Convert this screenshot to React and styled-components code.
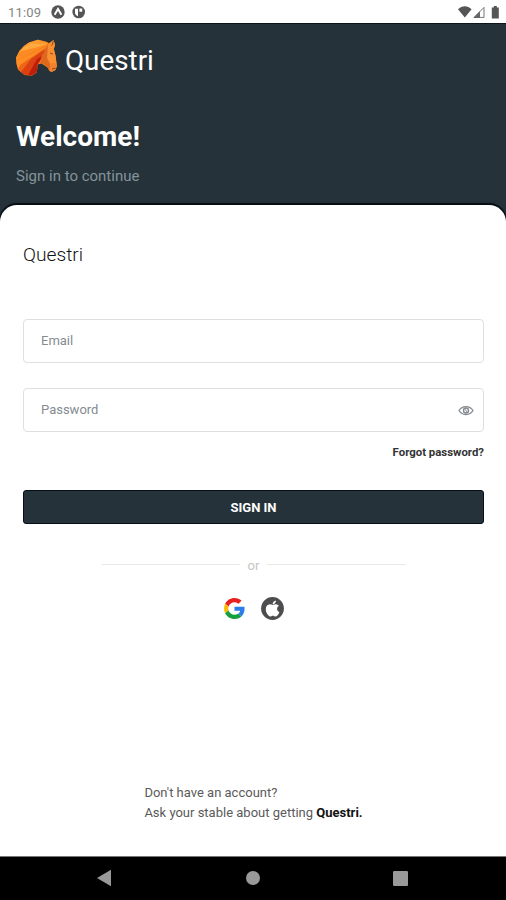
import React from 'react';
import styled, { createGlobalStyle } from 'styled-components';

const HorseLogo = () => (
  <svg width='42' height='38' viewBox='0 0 42 38'>
    <path
      fill='#f47b20'
      d='M37.6 1L39 6l-1.2 4 1.8 7 1.2 10-1.4 4-4 2-2.2-1.4-1.8-3.2-6-4-3.6 1-1 8-5 3.4-7.4-.8L2 30.4.6 25 0 19l3.4-7L8 7l5-3.6L22 .8l8 1.6 3 1.8z'
    />
    <path fill='#ff9a2e' d='M33 4.2L22 .8 13 3.4 8 7l-4.6 5L0 19l12-5z' />
    <path fill='#ffa941' d='M31 5.4L14 4.4 8 8.4 5 12z' />
    <path fill='#fb8b22' d='M32 5.6L3.4 13 0 19l.6 3L15 14z' />
    <path fill='#ff8d22' d='M32 6.6L.4 22l.2 3 1.4 4.4L14 20z' />
    <path fill='#ed6518' d='M31 8L4 26l-2 4.4 3 2.6 12-11z' />
    <path fill='#dd4011' d='M29 10.6L15 20 5 33l3.4 2.8 3.6.4 11-13 5-7z' />
    <path fill='#bd1f0c' d='M26 17l-5 3-9 16.2 3.8.4 5-3.4 1-8 1.8-3z' />
    <path fill='#f98f31' d='M37.6 1L33 4.6 30 11l1 8 3 6 2 7.6 3.4-1.6 1.4-4-1.2-10-1.8-7L39 6z' />
    <path fill='#df681f' d='M32 6l-6.4 11-1 7 1.2.4 6 4 1.8 3.2L34 25l-3-6z' />
    <path fill='#f0822e' d='M35 24l5 .4.8 2.6-1.4 4-4 2-2.2-1.4z' />
    <path stroke='#84401e' strokeWidth='.9' fill='none' d='M34 14l3 1.2M37.6 1.6l-1.8 5M36 30l3.6-.8' />
  </svg>
);

const GoogleLogo = () => (
  <svg width='21' height='21' viewBox='0 0 48 48'>
    <path
      fill='#ea1f1f'
      d='M24 9.5c3.54 0 6.71 1.22 9.21 3.6l6.85-6.85C35.9 2.38 30.47 0 24 0 14.62 0 6.51 5.38 2.56 13.22l7.98 6.19C12.43 13.72 17.74 9.5 24 9.5z'
    />
    <path
      fill='#2b7de9'
      d='M46.98 24.55c0-1.57-.15-3.09-.38-4.55H24v9.02h12.94c-.58 2.96-2.26 5.48-4.78 7.18l7.73 6c4.51-4.18 7.09-10.36 7.09-17.65z'
    />
    <path
      fill='#fbbc05'
      d='M10.53 28.59c-.48-1.45-.76-2.99-.76-4.59s.27-3.14.76-4.59l-7.98-6.19C.92 16.46 0 20.12 0 24c0 3.88.92 7.54 2.56 10.78l7.97-6.19z'
    />
    <path
      fill='#14a03c'
      d='M24 48c6.48 0 11.93-2.13 15.89-5.81l-7.73-6c-2.15 1.45-4.92 2.3-8.16 2.3-6.26 0-11.57-4.22-13.47-9.91l-7.98 6.19C6.51 42.62 14.62 48 24 48z'
    />
  </svg>
);

const AppleLogo = () => (
  <svg width='23' height='23' viewBox='0 0 23 23'>
    <circle cx='11.5' cy='11.5' r='11.4' fill='#4d4d4f' />
    <path
      fill='#fff'
      transform='translate(.9 .8) scale(.89)'
      d='M17.05 20.28c-.98.95-2.05.8-3.08.35-1.09-.46-2.09-.48-3.24 0-1.44.62-2.2.44-3.06-.35C2.79 15.25 3.51 7.59 9.05 7.31c1.35.07 2.29.74 3.08.8 1.18-.24 2.31-.93 3.57-.84 1.51.12 2.65.72 3.4 1.8-3.12 1.87-2.38 5.98.48 7.13-.57 1.5-1.31 2.99-2.54 4.09zM12.03 7.25c-.15-2.23 1.66-4.07 3.74-4.25.29 2.58-2.34 4.5-3.74 4.25z'
    />
  </svg>
);

const EyeIcon = () => (
  <svg width='16' height='11' viewBox='0 0 16 11' fill='none' stroke='#858b91'>
    <path strokeWidth='1.3' d='M1 5.5C4.2.2 11.8.2 15 5.5 11.8 10.8 4.2 10.8 1 5.5z' />
    <circle cx='8' cy='5.5' r='2.5' strokeWidth='1.4' />
    <path strokeWidth='1' d='M6.4 3.4l3.2 4.2' />
  </svg>
);

const StatusLeftIcons = () => (
  <svg width='35' height='14' viewBox='0 0 35 14'>
    <circle cx='7' cy='7' r='6.7' fill='#555' />
    <path d='M3.6 9.8L7 4l3.4 5.8' fill='none' stroke='#fff' strokeWidth='1.9' />
    <circle cx='27.7' cy='7' r='6.3' fill='#555' />
    <path fill='#fff' d='M24 3.8h3v7.4a5 5 0 01-3-2.4zM28.4 3.6h2.8v3.2h-2.8z' />
  </svg>
);

const StatusRightIcons = () => (
  <svg width='42' height='14' viewBox='0 0 42 14'>
    <path fill='#555' d='M0 4.2C4 .2 9.6.2 13.6 4.2L6.8 12.6z' />
    <path fill='none' stroke='#777' strokeWidth='1' d='M16 12.4L26 2.4v10z' />
    <path fill='#666' d='M15.4 12.9L22 6.3v6.6z' />
    <path fill='#555' d='M35.8 1h3v1.4h2v11h-7v-11h2z' />
  </svg>
);

const App = () => {
  return (
    <>
      <GlobalStyle />
      <Screen>
        <StatusBar>
          <Clock>11:09</Clock>
          <StatusLeftIcons />
          <StatusRight>
            <StatusRightIcons />
          </StatusRight>
        </StatusBar>
        <Header>
          <Brand>
            <HorseLogo />
            <BrandName>Questri</BrandName>
          </Brand>
          <Title>Welcome!</Title>
          <Subtitle>Sign in to continue</Subtitle>
        </Header>
        <CardBackdrop>
          <Card>
            <CardTitle>Questri</CardTitle>
            <Field>
              <Input type='text' placeholder='Email' />
            </Field>
            <Field>
              <Input type='password' placeholder='Password' />
              <EyeIcon />
            </Field>
            <Forgot>Forgot password?</Forgot>
            <SignInButton>SIGN IN</SignInButton>
            <Divider>
              <Line />
              <span>or</span>
              <Line />
            </Divider>
            <Socials>
              <GoogleLogo />
              <AppleLogo />
            </Socials>
            <Footer>
              <FooterLine>Don't have an account?</FooterLine>
              <FooterLine>
                Ask your stable about getting <b>Questri.</b>
              </FooterLine>
            </Footer>
          </Card>
        </CardBackdrop>
        <NavBar>
          <svg width='15' height='18' viewBox='0 0 15 18'>
            <path fill='#999' d='M14 .8v16.4L0 9z' />
          </svg>
          <svg width='14' height='14' viewBox='0 0 14 14'>
            <circle cx='7' cy='7' r='7' fill='#999' />
          </svg>
          <svg width='15' height='15' viewBox='0 0 15 15'>
            <rect width='15' height='15' rx='1.2' fill='#999' />
          </svg>
        </NavBar>
      </Screen>
    </>
  );
};

export default App;

const GlobalStyle = createGlobalStyle`
  * {
    box-sizing: border-box;
  }

  body {
    margin: 0;
    font-family: Roboto, sans-serif;
  }

  svg {
    display: block;
    flex-shrink: 0;
  }
`;

const Screen = styled.div`
  display: flex;
  flex-direction: column;
  width: 506px;
  height: 900px;
  background-color: #fff;
  overflow: hidden;
`;

const StatusBar = styled.div`
  display: flex;
  align-items: center;
  height: 23px;
  padding: 1px 6px 0 8px;
  flex-shrink: 0;
`;

const Clock = styled.span`
  width: 43px;
  font-size: 13px;
  letter-spacing: 0.2px;
  color: #858585;
`;

const StatusRight = styled.div`
  margin-left: auto;
`;

const Header = styled.header`
  height: 182px;
  padding: 15px 16px 0;
  border-top: 1px solid #0c151a;
  background-color: #253239;
  flex-shrink: 0;
`;

const Brand = styled.div`
  display: flex;
  height: 38px;
`;

const BrandName = styled.span`
  margin: 5px 0 0 7px;
  line-height: 34px;
  font-size: 27.8px;
  color: #fff;
`;

const Title = styled.h1`
  margin: 43px 0 0;
  line-height: 34px;
  font-size: 28px;
  font-weight: 700;
  color: #fff;
`;

const Subtitle = styled.p`
  margin: 12px 0 0;
  line-height: 20px;
  font-size: 15px;
  color: #84939b;
`;

const CardBackdrop = styled.div`
  display: flex;
  flex: 1;
  background: linear-gradient(#253239 20px, #fff 20px);
`;

const Card = styled.main`
  display: flex;
  flex-direction: column;
  width: 100%;
  padding: 38px 22px 0 23px;
  border-radius: 17px 17px 0 0;
  background-color: #fff;
  box-shadow: 0 -1px 1px 1px #060d13;
  clip-path: inset(-3px 0 0 0);
`;

const CardTitle = styled.h2`
  margin: 0 0 52px;
  line-height: 24px;
  font-size: 19.2px;
  font-weight: 300;
  color: #111;
`;

const Field = styled.label`
  display: flex;
  align-items: center;
  height: 44px;
  margin-bottom: 25px;
  padding: 0 9px 0 17px;
  border: 1px solid #dedfe0;
  border-radius: 4px;
`;

const Input = styled.input`
  flex: 1;
  height: 100%;
  padding: 0 0 2px;
  border: none;
  outline: none;
  background-color: transparent;
  font-family: inherit;
  font-size: 13px;

  &::placeholder {
    color: #858b91;
    opacity: 1;
  }
`;

const Forgot = styled.a`
  align-self: flex-end;
  margin-top: -13px;
  line-height: 16px;
  font-size: 11.4px;
  font-weight: 700;
  color: #333;
`;

const SignInButton = styled.button`
  height: 34px;
  margin-top: 30px;
  padding: 0;
  border: 1px solid #07101a;
  border-radius: 3px;
  background-color: #253239;
  font-family: inherit;
  font-size: 13px;
  font-weight: 700;
  color: #fff;
`;

const Divider = styled.div`
  display: flex;
  align-items: center;
  align-self: center;
  gap: 8px;
  width: 304px;
  height: 20px;
  margin-top: 31px;
  font-size: 13px;
  color: #c4c4c4;
`;

const Line = styled.div`
  flex: 1;
  height: 1px;
  margin-bottom: 2px;
  background-color: #e8e8e8;
`;

const Socials = styled.div`
  display: flex;
  justify-content: center;
  align-items: center;
  gap: 16px;
  height: 24px;
  margin-top: 21px;
`;

const Footer = styled.footer`
  align-self: center;
  margin: auto 0 33px;
`;

const FooterLine = styled.p`
  margin: 0;
  line-height: 20px;
  font-size: 13px;
  color: #5a5a5a;

  b {
    color: #111;
  }
`;

const NavBar = styled.nav`
  display: flex;
  justify-content: space-between;
  align-items: center;
  height: 44px;
  padding: 0 98px 1px 97px;
  border-top: 1px solid #777;
  background-color: #000;
  flex-shrink: 0;
`;
